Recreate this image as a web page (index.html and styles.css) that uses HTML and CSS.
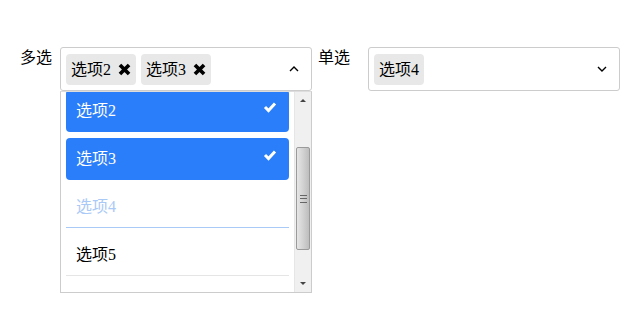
FILE: index.html
```html
<!DOCTYPE html>
<html lang="zh">
<head>
    <meta charset="UTF-8">
    <title>选择器</title>
    <link rel="stylesheet" href="styles.css">
</head>
<body>
    <div class="row">
        <div class="label">多选</div>
        <div class="field">
            <div class="select open">
                <div class="tags">
                    <span class="tag">选项2
                        <svg class="tag-x" viewBox="0 0 12 12"><path d="M1.8 1.8 L10.2 10.2 M10.2 1.8 L1.8 10.2"/></svg>
                    </span>
                    <span class="tag">选项3
                        <svg class="tag-x" viewBox="0 0 12 12"><path d="M1.8 1.8 L10.2 10.2 M10.2 1.8 L1.8 10.2"/></svg>
                    </span>
                </div>
                <svg class="arrow" viewBox="0 0 10 6"><path d="M1 5 L5 1 L9 5"/></svg>
            </div>
            <div class="menu">
                <div class="options">
                    <div class="option selected first">选项2
                        <svg class="check" viewBox="0 0 14 12"><path d="M2 6 L5.5 9.5 L12 2.5"/></svg>
                    </div>
                    <div class="option selected">选项3
                        <svg class="check" viewBox="0 0 14 12"><path d="M2 6 L5.5 9.5 L12 2.5"/></svg>
                    </div>
                    <div class="option disabled">选项4</div>
                    <div class="option">选项5</div>
                </div>
                <div class="scrollbar">
                    <div class="sb-btn"><span class="tri up"></span></div>
                    <div class="sb-track">
                        <div class="sb-thumb">
                            <div class="grip"></div>
                        </div>
                    </div>
                    <div class="sb-btn"><span class="tri down"></span></div>
                </div>
            </div>
        </div>

        <div class="label single">单选</div>
        <div class="field">
            <div class="select">
                <div class="tags">
                    <span class="tag">选项4</span>
                </div>
                <svg class="arrow" viewBox="0 0 10 6"><path d="M1 1 L5 5 L9 1"/></svg>
            </div>
        </div>
    </div>
</body>
</html>
```

FILE: styles.css
```css
body {
    margin: 0;
    background: white;
    color: #000;
    font-family: "Liberation Serif", "Noto Sans CJK SC", serif;
    font-size: 16px;
}

.row {
    display: flex;
    align-items: flex-start;
    padding: 47px 0 0 20px;
}

.label {
    width: 40px;
    padding-top: 1px;
    line-height: 20px;
}

.label.single {
    width: 50px;
    margin-left: 6px;
}

.field {
    width: 252px;
}

.select {
    height: 42px;
    border: 1px solid #ccc;
    border-radius: 3px;
    display: flex;
    align-items: center;
    padding: 0 12px 0 5px;
}

.tags {
    flex: 1;
    display: flex;
    gap: 5px;
}

.tag {
    display: flex;
    align-items: center;
    height: 31px;
    padding: 0 5px 0 5px;
    background: #e8e8e8;
    border-radius: 4px;
    line-height: 31px;
}

.tag-x {
    width: 13px;
    height: 13px;
    margin-left: 7px;
    fill: none;
    stroke: #000;
    stroke-width: 3.4;
}

.arrow {
    width: 10px;
    height: 6px;
    fill: none;
    stroke: #000;
    stroke-width: 1.4;
}

.menu {
    display: flex;
    height: 200px;
    border: 1px solid #ccc;
    border-top-color: #ddd;
}

.options {
    flex: 1;
    overflow: hidden;
    padding: 0 5px 0 5px;
}

.option {
    box-sizing: border-box;
    display: flex;
    align-items: center;
    justify-content: space-between;
    height: 42px;
    margin-bottom: 6px;
    padding: 0 12px 3px 10px;
    border-bottom: 1px solid #e5e5e5;
}

.option.first {
    margin-top: -2px;
}

.option.selected {
    background: #2a7ef9;
    color: white;
    border-radius: 4px;
    border-bottom-color: transparent;
}

.option.disabled {
    color: #a9c9f7;
    border-bottom-color: #a9c9f7;
}

.check {
    width: 14px;
    height: 12px;
    margin-top: -5px;
    fill: none;
    stroke: white;
    stroke-width: 3;
}

.scrollbar {
    width: 16px;
    display: flex;
    flex-direction: column;
    background: #f0f0f0;
    border-left: 1px solid #e6e6e6;
}

.sb-btn {
    height: 17px;
    display: flex;
    align-items: center;
    justify-content: center;
}

.tri {
    width: 0;
    height: 0;
    border-left: 3px solid transparent;
    border-right: 3px solid transparent;
}

.tri.up {
    border-bottom: 3px solid #444;
}

.tri.down {
    border-top: 3px solid #444;
}

.sb-track {
    flex: 1;
    padding-top: 38px;
}

.sb-thumb {
    height: 101px;
    margin: 0 1px;
    border: 1px solid #9a9a9a;
    border-radius: 2px;
    background: linear-gradient(to right, #e6e6e6, #d2d2d2 50%, #bdbdbd);
    display: flex;
    align-items: center;
    justify-content: center;
}

.grip {
    width: 7px;
    height: 6px;
    border-top: 1px solid #666;
    border-bottom: 1px solid #666;
    background: linear-gradient(#666, #666) center / 100% 1px no-repeat;
}
```
